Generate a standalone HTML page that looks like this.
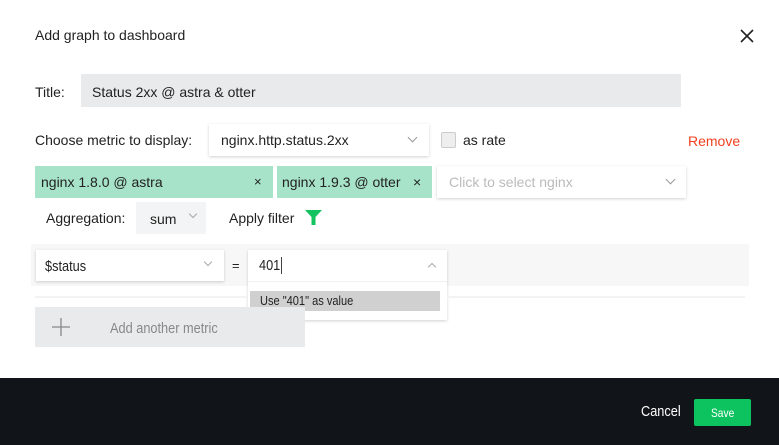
<!DOCTYPE html>
<html><head><style>
*{box-sizing:border-box;margin:0;padding:0}
body{width:779px;height:445px;overflow:hidden;background:#fff;font-family:"Liberation Sans",sans-serif;color:#222;position:relative;font-size:14px}
.a{position:absolute}
.sh{background:#fff;box-shadow:0 1px 3px rgba(0,0,0,.18)}
.chev{position:absolute;width:7px;height:7px;border-right:1px solid #999;border-bottom:1px solid #999;transform:rotate(45deg)}
.c{transform:scaleX(.85);transform-origin:left center;white-space:nowrap}
</style></head><body>
<div class="a" style="left:35px;top:27px;font-size:14px">Add graph to dashboard</div>
<svg class="a" style="left:740px;top:29px" width="14" height="14"><path d="M1 1L13 13M13 1L1 13" stroke="#222" stroke-width="1.6"/></svg>

<div class="a" style="left:35px;top:84px">Title:</div>
<div class="a" style="left:81px;top:74px;width:600px;height:33px;background:#e9eaeb"></div>
<div class="a" style="left:92px;top:84px">Status 2xx @ astra &amp; otter</div>

<div class="a" style="left:35px;top:132px">Choose metric to display:</div>
<div class="a sh" style="left:209px;top:124px;width:220px;height:32px"></div>
<div class="a" style="left:221px;top:132px">nginx.http.status.2xx</div>
<div class="chev" style="left:409px;top:134px"></div>
<div class="a" style="left:441px;top:132px;width:15px;height:16px;border:1px solid #ccc;background:#eee;border-radius:2px"></div>
<div class="a" style="left:463px;top:132px">as rate</div>
<div class="a" style="left:688px;top:133px;color:#f0401f">Remove</div>

<div class="a" style="left:35px;top:166px;width:238px;height:32px;background:#a6e3c8"></div>
<div class="a" style="left:41px;top:174px">nginx 1.8.0 @ astra</div>
<div class="a" style="left:254px;top:174px;font-size:13px">×</div>
<div class="a" style="left:277px;top:166px;width:155px;height:32px;background:#a6e3c8"></div>
<div class="a" style="left:282px;top:174px">nginx 1.9.3 @ otter</div>
<div class="a" style="left:413px;top:174px;font-size:14px">×</div>
<div class="a sh" style="left:437px;top:166px;width:249px;height:32px"></div>
<div class="a" style="left:449px;top:174px;color:#bbb">Click to select nginx</div>
<div class="chev" style="left:667px;top:176px"></div>

<div class="a" style="left:46px;top:210px">Aggregation:</div>
<div class="a" style="left:136px;top:202px;width:70px;height:32px;background:#f3f4f5"></div>
<div class="a" style="left:150px;top:211px">sum</div>
<div class="chev" style="left:190px;top:211px;width:6px;height:6px;border-color:#aaa"></div>
<div class="a" style="left:229px;top:210px">Apply filter</div>
<svg class="a" style="left:305px;top:210px" width="17" height="16"><path d="M0 0H17L10.5 7V15H6.5V7Z" fill="#13c35f"/></svg>

<div class="a" style="left:31px;top:244px;width:718px;height:42px;background:#f7f7f7"></div>
<div class="a sh" style="left:36px;top:250px;width:188px;height:31px"></div>
<div class="a c" style="left:45px;top:258px;font-size:15px">$status</div>
<div class="chev" style="left:205px;top:259px;width:6px;height:6px;border-color:#aaa"></div>
<div class="a" style="left:232px;top:258px;font-size:13px">=</div>
<div class="a sh" style="left:248px;top:250px;width:199px;height:70px"></div>
<div class="a" style="left:248px;top:281px;width:199px;height:1px;background:#f0f0f0"></div>
<div class="a c" style="left:259px;top:257px;font-size:15px">401<span style="border-left:1px solid #222;margin-left:1px"></span></div>
<div class="chev" style="left:429px;top:264px;width:6px;height:6px;border-color:#aaa;transform:rotate(225deg)"></div>
<div class="a" style="left:250px;top:291px;width:190px;height:20px;background:#d0d0d0"></div>
<div class="a c" style="left:260px;top:293px;font-size:13px">Use "401" as value</div>
<div class="a" style="left:35px;top:296px;width:212px;height:2px;background:#f3f3f3"></div>
<div class="a" style="left:447px;top:296px;width:298px;height:2px;background:#f3f3f3"></div>

<div class="a" style="left:35px;top:307px;width:270px;height:40px;background:#e9eaeb"></div>
<svg class="a" style="left:52px;top:318px" width="18" height="18"><path d="M9 0V18M0 9H18" stroke="#888" stroke-width="1.3"/></svg>
<div class="a c" style="left:110px;top:320px;color:#888;font-size:15px">Add another metric</div>

<div class="a" style="left:0;top:378px;width:779px;height:67px;background:#111418"></div>
<div class="a c" style="left:641px;top:403px;color:#fff;font-size:15px">Cancel</div>
<div class="a" style="left:694px;top:399px;width:57px;height:27px;background:#0cc35f;border-radius:2px"></div>
<div class="a c" style="left:711px;top:406px;color:#fff;font-size:12px">Save</div>
</body></html>
